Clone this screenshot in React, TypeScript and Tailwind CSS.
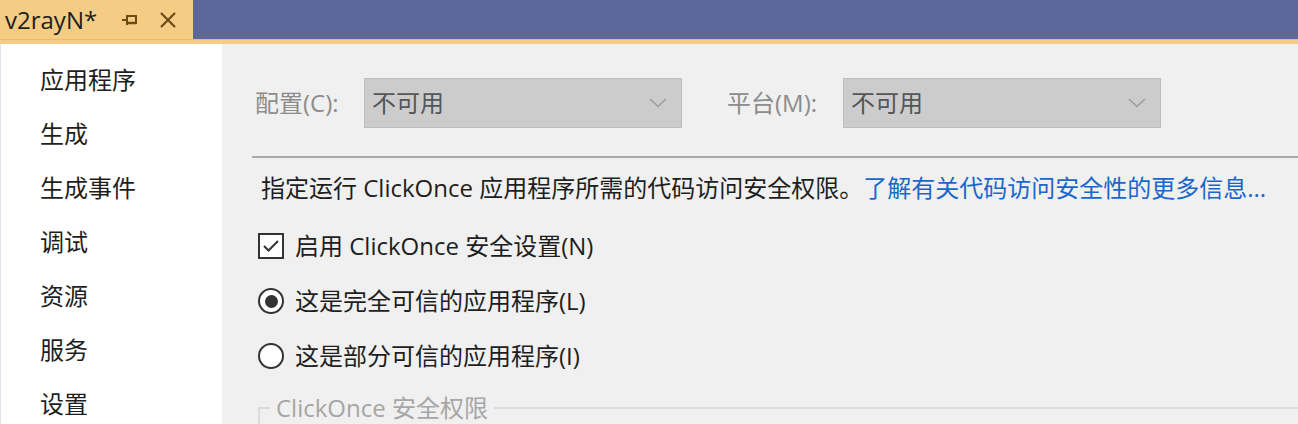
import { ReactNode } from 'react'

const navItems = ['应用程序', '生成', '生成事件', '调试', '资源', '服务', '设置']

function Select({ value }: { value: string }) {
  return (
    <div className="w-[318px] h-[50px] bg-[#cccccc] border border-[#bdbdbd] flex items-center justify-between pl-[7px] pr-[14px]">
      <span className="text-[#555555]">{value}</span>
      <svg width="18" height="10" viewBox="0 0 18 10" fill="none">
        <path d="M1 1 L9 8.5 L17 1" stroke="#9d9d9d" strokeWidth="1.6" />
      </svg>
    </div>
  )
}

function Option({ control, children }: { control: ReactNode; children: ReactNode }) {
  return (
    <div className="flex items-center gap-[11px] h-[30px]">
      {control}
      <span className="text-[#1e1e1e]">{children}</span>
    </div>
  )
}

export default function App() {
  return (
    <div
      className="w-[1298px] h-[424px] overflow-hidden flex flex-col text-[24px] leading-none"
      style={{ fontFamily: '"Open Sans", "Noto Sans CJK SC", sans-serif' }}
    >
      {/* Tab strip */}
      <div className="h-[39px] bg-[#5b6899] flex shrink-0">
        <div className="w-[193px] bg-[#f5cc84] flex items-center pl-[5px]">
          <span className="text-[#1e1e1e]">v2rayN*</span>
          <svg className="ml-[24px]" width="18" height="16" viewBox="0 0 18 16" fill="none">
            <path d="M1 8 H6 M6 3 V13" stroke="#6e4a17" strokeWidth="2" />
            <rect x="6" y="4" width="9" height="7" stroke="#6e4a17" strokeWidth="2" />
            <path d="M6 11 H15" stroke="#6e4a17" strokeWidth="2.5" />
          </svg>
          <svg className="ml-[20px]" width="18" height="18" viewBox="0 0 18 18" fill="none">
            <path d="M2 2 L16 16 M16 2 L2 16" stroke="#6e4a17" strokeWidth="2.2" />
          </svg>
        </div>
      </div>
      <div className="h-[5px] bg-[#f5cc84] border-t border-[#eabd72] shrink-0" />

      <div className="flex flex-1 min-h-0">
        {/* Sidebar */}
        <div className="w-[222px] bg-white border-l border-[#dfe3ec] pt-[9px] pl-[39px] shrink-0">
          {navItems.map((item) => (
            <div key={item} className="h-[54px] flex items-center text-[#1e1e1e]">
              {item}
            </div>
          ))}
        </div>

        {/* Main */}
        <div className="flex-1 bg-[#f0f0f0] pl-[30px]">
          <div className="flex items-center pt-[34px] pl-[3px]">
            <span className="w-[109px] text-[#8c8c8c]">配置(C):</span>
            <Select value="不可用" />
            <span className="ml-[45px] w-[116px] text-[#8c8c8c]">平台(M):</span>
            <Select value="不可用" />
          </div>

          <div className="mt-[28px] h-[2px] bg-[#a8a8a8]" />

          <div className="pl-[9px] pt-[15px] text-[#1e1e1e] whitespace-nowrap h-[30px] flex items-center box-content">
            指定运行 ClickOnce 应用程序所需的代码访问安全权限。
            <span className="text-[#1a67cc]">了解有关代码访问安全性的更多信息...</span>
          </div>

          <div className="pl-[6px] pt-[28px] flex flex-col gap-[25px]">
            <Option
              control={
                <div className="w-[26px] h-[26px] border-2 border-[#333333] bg-white flex items-center justify-center">
                  <svg width="18" height="14" viewBox="0 0 18 14" fill="none">
                    <path d="M2 7 L6.5 11.5 L16 2" stroke="#333333" strokeWidth="2" />
                  </svg>
                </div>
              }
            >
              启用 ClickOnce 安全设置(N)
            </Option>
            <Option
              control={
                <div className="w-[26px] h-[26px] rounded-full border-2 border-[#333333] bg-white flex items-center justify-center">
                  <div className="w-[13px] h-[13px] rounded-full bg-[#333333]" />
                </div>
              }
            >
              这是完全可信的应用程序(L)
            </Option>
            <Option
              control={<div className="w-[26px] h-[26px] rounded-full border-2 border-[#333333] bg-white" />}
            >
              这是部分可信的应用程序(I)
            </Option>
          </div>

          {/* Group box */}
          <div className="ml-[6px] mt-[36px] border-l-2 border-t-2 border-[#dcdcdc] h-[40px] relative">
            <span className="absolute -top-[13px] left-[10px] px-[6px] bg-[#f0f0f0] text-[#a6a6a6]">
              ClickOnce 安全权限
            </span>
          </div>
        </div>
      </div>
    </div>
  )
}
